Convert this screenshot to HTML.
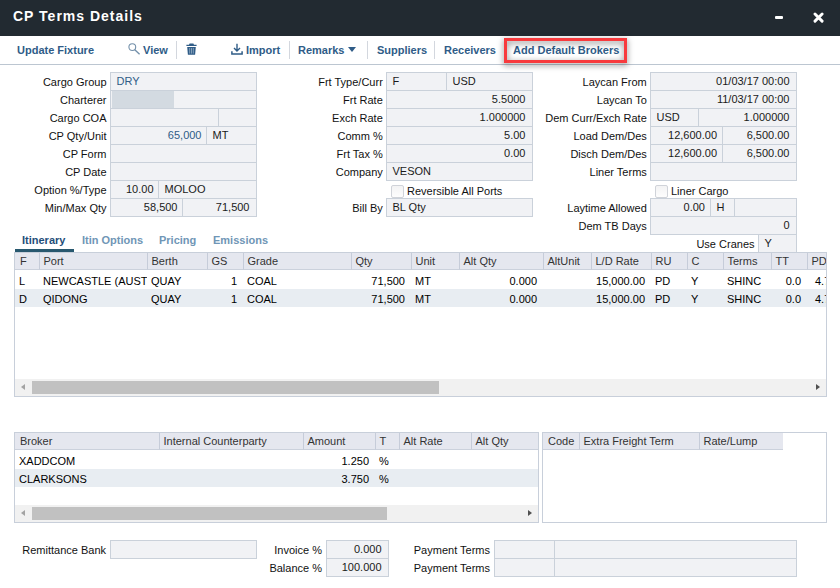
<!DOCTYPE html>
<html><head><meta charset="utf-8"><title>CP Terms Details</title>
<style>
*{box-sizing:border-box;margin:0;padding:0}
html,body{width:840px;height:588px;overflow:hidden;background:#fff}
body{font-family:"Liberation Sans",Arial,sans-serif;font-size:11px;color:#1a1a1a;position:relative}
.abs{position:absolute}
.title{left:0;top:0;width:840px;height:36px;background:#222a31;color:#fff;font-weight:bold;font-size:14px;letter-spacing:1px;line-height:33px;padding-left:13px}
.tb{left:0;top:36px;width:840px;height:29px;border-bottom:1px solid #bcc6d1;background:#fff}
.tb span{position:absolute;top:0;line-height:28px;font-weight:bold;color:#2f5c87;white-space:nowrap}
.sep{position:absolute;top:5px;width:1px;height:18px;background:#d3d7de}
.lbl{position:absolute;height:18px;line-height:21px;text-align:right;white-space:nowrap;color:#111}
.f{position:absolute;height:19px;border:1px solid #cad1da;background:#f1f2f5;line-height:17px;padding:0 6.5px 0 5.5px;white-space:nowrap;overflow:hidden;color:#1a1a1a}
.f.r{text-align:right}
.f.b{color:#2f5c87}
.cb{position:absolute;width:13px;height:13px;border:1px solid #d0d3d9;background:linear-gradient(#f3f3f4,#fdfdfd);border-radius:2px}
.grid{position:absolute;border:1px solid #c8cfda;background:#fff;overflow:hidden}
.gh.first{border-left:none;padding-left:5px}
.gh{position:absolute;top:0;height:17px;background:#e5e7ef;border-left:1px solid #c6ccd9;border-bottom:1px solid #cbd1dc;line-height:16px;padding-left:3.5px;white-space:nowrap;overflow:hidden;color:#333}
.row{position:absolute;left:0;height:18px;width:100%}
.row.alt{background:#e8edf2}
.c{position:absolute;top:0;height:18px;line-height:20px;white-space:nowrap;overflow:hidden;color:#000}
.c.r{text-align:right}
.sb{position:absolute;left:0;height:17px;background:#f1f1f1;width:100%}
.thumb{position:absolute;top:2px;height:13px;background:#c1c1c1}
.arr{position:absolute;top:4.8px;width:0;height:0;border-top:3.6px solid transparent;border-bottom:3.6px solid transparent}
.tab{position:absolute;top:231px;height:19px;line-height:19px;font-weight:bold;color:#7096b6;font-size:11px;white-space:nowrap}
</style></head><body>

<div class="abs title">CP Terms Details</div>
<div class="abs" style="left:775px;top:16px;width:8px;height:2.5px;background:#fff;border-radius:1px"></div>
<svg class="abs" style="left:813px;top:12px" width="11" height="11" viewBox="0 0 11 11"><path d="M2 2 L9.1 9.1 M9.1 2 L2 9.1" stroke="#fff" stroke-width="2.9" stroke-linecap="round"/></svg>
<div class="abs tb">
<span style="left:17px">Update Fixture</span>
<svg class="abs" style="left:127px;top:6px" width="14" height="14" viewBox="0 0 14 14"><circle cx="5.3" cy="5.1" r="3.4" fill="none" stroke="#7390aa" stroke-width="1.1"/><path d="M7.8 7.7 L12.6 12.2" stroke="#7390aa" stroke-width="1.4"/></svg>
<span style="left:143px">View</span>
<div class="sep" style="left:176px"></div>
<svg class="abs" style="left:186px;top:7px" width="11" height="12" viewBox="0 0 11 12"><path d="M3.6 0.4h3.8l0.6 1.3h2.6v1.4h-10.2v-1.4h2.6z M1.2 3.9h8.6l-0.7 7.9h-7.2z" fill="#2f5c87"/><path d="M3.7 5v5.6 M5.5 5v5.6 M7.3 5v5.6" stroke="#a9bdcf" stroke-width="0.7"/></svg>
<svg class="abs" style="left:231px;top:7px" width="12" height="12" viewBox="0 0 12 12"><path d="M6 0.8v7 M3 5l3 3 3-3" fill="none" stroke="#2f5c87" stroke-width="1.4"/><path d="M0.9 8.3v2.7h10.2v-2.7" fill="none" stroke="#2f5c87" stroke-width="1.5"/></svg>
<span style="left:246px">Import</span>
<div class="sep" style="left:289px"></div>
<span style="left:298px">Remarks</span>
<div class="abs" style="left:348px;top:11px;width:0;height:0;border-left:4.5px solid transparent;border-right:4.5px solid transparent;border-top:5.5px solid #2f5c87"></div>
<div class="sep" style="left:367px"></div>
<span style="left:377px">Suppliers</span>
<div class="sep" style="left:434px"></div>
<span style="left:444px">Receivers</span>
<span style="left:513px">Add Default Brokers</span>
</div>
<div class="abs" style="left:504px;top:38px;width:123px;height:25px;border:3px solid #f83a3d;filter:drop-shadow(0 2.5px 3px rgba(0,0,0,.55))"></div>
<div class="lbl" style="left:-33.5px;width:140px;top:72px">Cargo Group</div>
<div class="lbl" style="left:-33.5px;width:140px;top:90px">Charterer</div>
<div class="lbl" style="left:-33.5px;width:140px;top:108px">Cargo COA</div>
<div class="lbl" style="left:-33.5px;width:140px;top:126px">CP Qty/Unit</div>
<div class="lbl" style="left:-33.5px;width:140px;top:144px">CP Form</div>
<div class="lbl" style="left:-33.5px;width:140px;top:162px">CP Date</div>
<div class="lbl" style="left:-33.5px;width:140px;top:180px">Option %/Type</div>
<div class="lbl" style="left:-33.5px;width:140px;top:198px">Min/Max Qty</div>
<div class="f b" style="left:110px;top:72px;width:147px">DRY</div>
<div class="f " style="left:110px;top:90px;width:147px"></div>
<div class="abs" style="left:112px;top:91px;width:62px;height:17px;background:#d3dae1"></div>
<div class="f " style="left:110px;top:108px;width:109px"></div>
<div class="f " style="left:218px;top:108px;width:39px"></div>
<div class="f r b" style="left:110px;top:126px;width:97px;padding-right:4.5px">65,000</div>
<div class="f " style="left:206px;top:126px;width:51px">MT</div>
<div class="f " style="left:110px;top:144px;width:147px"></div>
<div class="f " style="left:110px;top:162px;width:147px"></div>
<div class="f r" style="left:110px;top:180px;width:49px;padding-right:4.5px">10.00</div>
<div class="f " style="left:158px;top:180px;width:99px">MOLOO</div>
<div class="f r" style="left:110px;top:198px;width:73px;padding-right:4.5px">58,500</div>
<div class="f r" style="left:182px;top:198px;width:75px">71,500</div>
<div class="lbl" style="left:242.8px;width:140px;top:72px">Frt Type/Curr</div>
<div class="lbl" style="left:242.8px;width:140px;top:90px">Frt Rate</div>
<div class="lbl" style="left:242.8px;width:140px;top:108px">Exch Rate</div>
<div class="lbl" style="left:242.8px;width:140px;top:126px">Comm %</div>
<div class="lbl" style="left:242.8px;width:140px;top:144px">Frt Tax %</div>
<div class="lbl" style="left:242.8px;width:140px;top:162px">Company</div>
<div class="lbl" style="left:242.8px;width:140px;top:198px">Bill By</div>
<div class="f " style="left:386px;top:72px;width:61px">F</div>
<div class="f " style="left:446px;top:72px;width:87px">USD</div>
<div class="f r" style="left:386px;top:90px;width:147px">5.5000</div>
<div class="f r" style="left:386px;top:108px;width:147px">1.000000</div>
<div class="f r" style="left:386px;top:126px;width:147px">5.00</div>
<div class="f r" style="left:386px;top:144px;width:147px">0.00</div>
<div class="f " style="left:386px;top:162px;width:147px">VESON</div>
<div class="cb" style="left:391px;top:185px"></div>
<div class="lbl" style="left:407px;top:181px;text-align:left">Reversible All Ports</div>
<div class="f " style="left:386px;top:198px;width:147px">BL Qty</div>
<div class="lbl" style="left:506.79999999999995px;width:140px;top:72px">Laycan From</div>
<div class="lbl" style="left:506.79999999999995px;width:140px;top:90px">Laycan To</div>
<div class="lbl" style="left:506.79999999999995px;width:140px;top:108px">Dem Curr/Exch Rate</div>
<div class="lbl" style="left:506.79999999999995px;width:140px;top:126px">Load Dem/Des</div>
<div class="lbl" style="left:506.79999999999995px;width:140px;top:144px">Disch Dem/Des</div>
<div class="lbl" style="left:506.79999999999995px;width:140px;top:162px">Liner Terms</div>
<div class="f r" style="left:650px;top:72px;width:147px">01/03/17 00:00</div>
<div class="f r" style="left:650px;top:90px;width:147px">11/03/17 00:00</div>
<div class="f " style="left:650px;top:108px;width:49px">USD</div>
<div class="f r" style="left:698px;top:108px;width:99px">1.000000</div>
<div class="f r" style="left:650px;top:126px;width:73px;padding-right:5px">12,600.00</div>
<div class="f r" style="left:722px;top:126px;width:75px">6,500.00</div>
<div class="f r" style="left:650px;top:144px;width:73px;padding-right:5px">12,600.00</div>
<div class="f r" style="left:722px;top:144px;width:75px">6,500.00</div>
<div class="f " style="left:650px;top:162px;width:147px"></div>
<div class="cb" style="left:655px;top:185px"></div>
<div class="lbl" style="left:671px;top:181px;text-align:left">Liner Cargo</div>
<div class="lbl" style="left:506.79999999999995px;width:140px;top:198px">Laytime Allowed</div>
<div class="f r" style="left:650px;top:198px;width:61px;padding-right:5px">0.00</div>
<div class="f " style="left:710px;top:198px;width:25px">H</div>
<div class="f " style="left:734px;top:198px;width:63px"></div>
<div class="lbl" style="left:506.79999999999995px;width:140px;top:216px">Dem TB Days</div>
<div class="f r" style="left:650px;top:216px;width:147px">0</div>
<div class="lbl" style="left:614.5px;width:140px;top:234px">Use Cranes</div>
<div class="f " style="left:758px;top:234px;width:39px">Y</div>
<div class="tab" style="left:22px;color:#1f4e79">Itinerary</div>
<div class="abs" style="left:15px;top:249px;width:59px;height:3px;background:#28586f;z-index:5"></div>
<div class="tab" style="left:82px">Itin Options</div>
<div class="tab" style="left:159px">Pricing</div>
<div class="tab" style="left:213px">Emissions</div>
<div class="grid" style="left:14px;top:252px;width:813px;height:145px">
<div class="gh first" style="left:0px;width:24px">F</div>
<div class="gh" style="left:24px;width:108px">Port</div>
<div class="gh" style="left:132px;width:60px">Berth</div>
<div class="gh" style="left:192px;width:36px">GS</div>
<div class="gh" style="left:228px;width:108px">Grade</div>
<div class="gh" style="left:336px;width:60px">Qty</div>
<div class="gh" style="left:396px;width:48px">Unit</div>
<div class="gh" style="left:444px;width:84px">Alt Qty</div>
<div class="gh" style="left:528px;width:48px">AltUnit</div>
<div class="gh" style="left:576px;width:60px">L/D Rate</div>
<div class="gh" style="left:636px;width:36px">RU</div>
<div class="gh" style="left:672px;width:36px">C</div>
<div class="gh" style="left:708px;width:48px">Terms</div>
<div class="gh" style="left:756px;width:36px">TT</div>
<div class="gh" style="left:792px;width:30px">PD</div>
<div class="row " style="top:18px">
<div class="c" style="left:0px;width:24px;padding-left:4px">L</div>
<div class="c" style="left:24px;width:108px;padding-left:4px">NEWCASTLE (AUST</div>
<div class="c" style="left:132px;width:60px;padding-left:4px">QUAY</div>
<div class="c r" style="left:192px;width:36px;padding-right:6px">1</div>
<div class="c" style="left:228px;width:108px;padding-left:4px">COAL</div>
<div class="c r" style="left:336px;width:60px;padding-right:6px">71,500</div>
<div class="c" style="left:396px;width:48px;padding-left:4px">MT</div>
<div class="c r" style="left:444px;width:84px;padding-right:6px">0.000</div>
<div class="c" style="left:528px;width:48px;padding-left:4px"></div>
<div class="c r" style="left:576px;width:60px;padding-right:6px">15,000.00</div>
<div class="c" style="left:636px;width:36px;padding-left:4px">PD</div>
<div class="c" style="left:672px;width:36px;padding-left:4px">Y</div>
<div class="c" style="left:708px;width:48px;padding-left:4px">SHINC</div>
<div class="c r" style="left:756px;width:36px;padding-right:6px">0.0</div>
<div class="c" style="left:792px;width:30px;padding-left:8px">4.7</div>
</div>
<div class="row alt" style="top:36px">
<div class="c" style="left:0px;width:24px;padding-left:4px">D</div>
<div class="c" style="left:24px;width:108px;padding-left:4px">QIDONG</div>
<div class="c" style="left:132px;width:60px;padding-left:4px">QUAY</div>
<div class="c r" style="left:192px;width:36px;padding-right:6px">1</div>
<div class="c" style="left:228px;width:108px;padding-left:4px">COAL</div>
<div class="c r" style="left:336px;width:60px;padding-right:6px">71,500</div>
<div class="c" style="left:396px;width:48px;padding-left:4px">MT</div>
<div class="c r" style="left:444px;width:84px;padding-right:6px">0.000</div>
<div class="c" style="left:528px;width:48px;padding-left:4px"></div>
<div class="c r" style="left:576px;width:60px;padding-right:6px">15,000.00</div>
<div class="c" style="left:636px;width:36px;padding-left:4px">PD</div>
<div class="c" style="left:672px;width:36px;padding-left:4px">Y</div>
<div class="c" style="left:708px;width:48px;padding-left:4px">SHINC</div>
<div class="c r" style="left:756px;width:36px;padding-right:6px">0.0</div>
<div class="c" style="left:792px;width:30px;padding-left:8px">4.7</div>
</div>
<div class="sb" style="top:126px"><div class="arr" style="left:6px;border-right:4.5px solid #a3a3a3"></div><div class="thumb" style="left:17px;width:407px"></div><div class="arr" style="left:801px;border-left:4.5px solid #505050"></div></div>
</div>
<div class="grid" style="left:14px;top:432px;width:525px;height:91px">
<div class="gh first" style="left:0px;width:144px">Broker</div>
<div class="gh" style="left:144px;width:144px">Internal Counterparty</div>
<div class="gh" style="left:288px;width:72px">Amount</div>
<div class="gh" style="left:360px;width:24px">T</div>
<div class="gh" style="left:384px;width:72px">Alt Rate</div>
<div class="gh" style="left:456px;width:68px">Alt Qty</div>
<div class="row " style="top:18px"><div class="c" style="left:0;width:144px;padding-left:4px">XADDCOM</div><div class="c r" style="left:288px;width:72px;padding-right:6px">1.250</div><div class="c" style="left:360px;width:24px;padding-left:4px">%</div></div>
<div class="row alt" style="top:36px"><div class="c" style="left:0;width:144px;padding-left:4px">CLARKSONS</div><div class="c r" style="left:288px;width:72px;padding-right:6px">3.750</div><div class="c" style="left:360px;width:24px;padding-left:4px">%</div></div>
<div class="sb" style="top:72px"><div class="arr" style="left:6px;border-right:4.5px solid #a3a3a3"></div><div class="thumb" style="left:17px;width:355px"></div><div class="arr" style="left:513px;border-left:4.5px solid #505050"></div></div>
</div>
<div class="grid" style="left:542px;top:432px;width:285px;height:91px">
<div class="gh first" style="left:0px;width:36px">Code</div>
<div class="gh" style="left:36px;width:120px">Extra Freight Term</div>
<div class="gh" style="left:156px;width:84px">Rate/Lump</div>
</div>
<div class="lbl" style="left:-34px;width:140px;top:540px">Remittance Bank</div>
<div class="f " style="left:110px;top:540px;width:147px"></div>
<div class="lbl" style="left:182px;width:140px;top:540px">Invoice %</div>
<div class="f r" style="left:326px;top:540px;width:63px">0.000</div>
<div class="lbl" style="left:182px;width:140px;top:558px">Balance %</div>
<div class="f r" style="left:326px;top:558px;width:63px">100.000</div>
<div class="lbl" style="left:350px;width:140px;top:540px">Payment Terms</div>
<div class="f " style="left:494px;top:540px;width:61px"></div>
<div class="f " style="left:554px;top:540px;width:243px"></div>
<div class="lbl" style="left:350px;width:140px;top:558px">Payment Terms</div>
<div class="f " style="left:494px;top:558px;width:61px"></div>
<div class="f " style="left:554px;top:558px;width:243px"></div>
</body></html>
